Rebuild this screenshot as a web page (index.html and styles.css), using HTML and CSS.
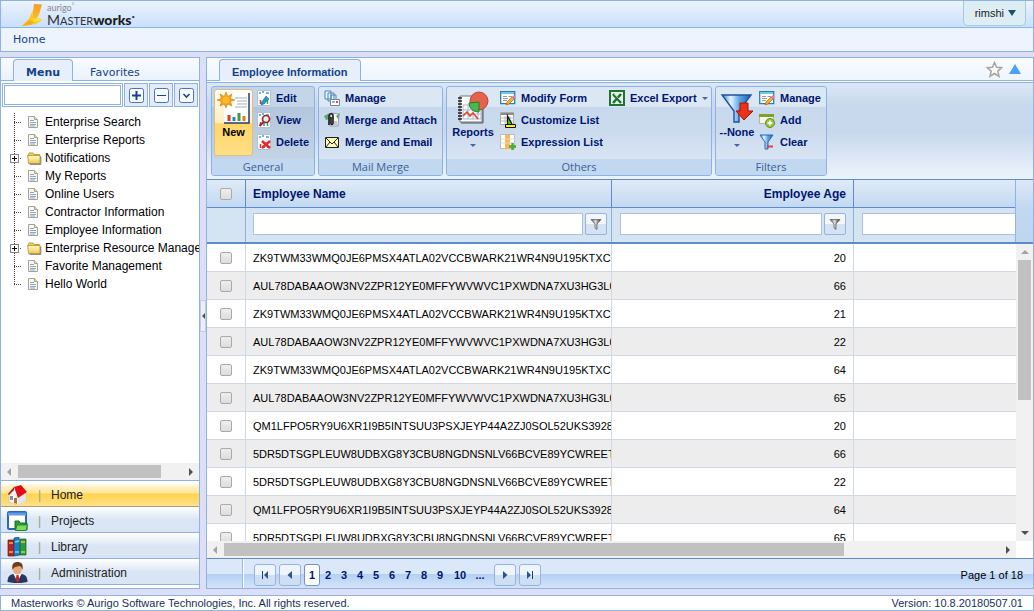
FILE: index.html
```html
<!DOCTYPE html>
<html lang="en">
<head>
<meta charset="utf-8">
<title>Masterworks - Employee Information</title>
<link rel="stylesheet" href="styles.css">
</head>
<body>
<svg class="defs" width="0" height="0" aria-hidden="true">
  <defs>
    <linearGradient id="gold" x1="0" y1="0" x2="0" y2="1"><stop offset="0" stop-color="#fffbc8"/><stop offset="1" stop-color="#f2c94f"/></linearGradient>
    <linearGradient id="blue" x1="0" y1="0" x2="1" y2="0"><stop offset="0" stop-color="#2c7fd6"/><stop offset=".3" stop-color="#e4f3ff"/><stop offset=".6" stop-color="#5da5e8"/><stop offset="1" stop-color="#1c5cae"/></linearGradient>
    <linearGradient id="dark" x1="0" y1="0" x2="1" y2="0"><stop offset="0" stop-color="#555"/><stop offset=".45" stop-color="#ddd"/><stop offset="1" stop-color="#222"/></linearGradient>
    <linearGradient id="logo" x1="0" y1="0" x2="0" y2="1"><stop offset="0" stop-color="#f79a2a"/><stop offset="1" stop-color="#ffc21c"/></linearGradient>
    <symbol id="i-doc" viewBox="0 0 10 12"><path d="M.5.5h6l3 3v8h-9z" fill="#f7f7f1" stroke="#a5a48c"/><path d="M6.5.5v3h3" fill="#dedccb" stroke="#a5a48c"/><path d="M2 4.5h4M2 6.500h6M2 8.500h6M2 10h5" stroke="#8ea6c6"/></symbol>
    <symbol id="i-folder" viewBox="0 0 15 13"><path d="M1 3 2 .9h4l1 1.600h5.700v2H1z" fill="#f0cf68" stroke="#b98f2c" stroke-width=".8"/><path d="M.7 3.500h12.300v8H1.500z" fill="url(#gold)" stroke="#b98f2c" stroke-width=".8"/><path d="M2.500 12.300h11.300V4.500" fill="none" stroke="#77756e"/></symbol>
    <symbol id="i-sheet" viewBox="0 0 14 16"><path d="M.5.5h13v15H.5z" fill="#fff" stroke="#b4c2d4"/><path d="M3.500 10v4" stroke="#d33" stroke-width="1.500"/><path d="M7 11v3" stroke="#38c" stroke-width="1.500"/><path d="M10.500 9v5" stroke="#3a4" stroke-width="1.500"/><path d="M2 3h2M5 2h2M9 3h3" stroke="#4a96d2" stroke-width="1.500"/></symbol>
    <symbol id="i-form" viewBox="0 0 16 16"><path d="M.7 1.700h14v12h-14z" fill="#fff" stroke="#2d7fa8" stroke-width="1.300"/><path d="M1 3h13" stroke="#73c5e6" stroke-width="2"/><path d="M3 6.500h4M3 8.500h5M3 10.500h4" stroke="#999"/><path d="M8.500 6.500h4" stroke="#999"/><path d="m7 12 5-5 2 2-5 5-3 1z" fill="#ffad2e" stroke="#9b651c" stroke-width=".7"/><path d="m12 7 2-2 2 2-2 2z" fill="#df7db0"/></symbol>
    <symbol id="i-funnel" viewBox="0 0 12 12"><path d="M1 1.500h10L7 6v5.500L5 10V6z" fill="url(#dark)" stroke="#555" stroke-width=".7"/></symbol>
  </defs>
</svg>

<header class="banner">
  <div class="logo">
    <svg width="22" height="24" viewBox="0 0 22 24" aria-hidden="true"><path d="m13 1 8 .5-3 10-3 5-4-1z" fill="url(#logo)"/><path d="m12 7-1 9 7-1 3 2-6 4-14 2 7-7z" fill="#ffc81c"/><path d="m12 16 6-1 3 2-8 2z" fill="#ffe23c"/><path d="M1 23l7-6 5 2-3 3z" fill="#f7ad1f"/></svg>
    <div class="logo-text"><span class="logo-top">aurigo<sup>°</sup></span><span class="logo-main">M<small>ASTER</small><b>works</b><sup>•</sup></span></div>
  </div>
  <button class="user" type="button">rimshi <span class="tri-down"></span></button>
</header>
<nav class="crumbs"><a href="#">Home</a></nav>

<main class="main">
  <aside class="side">
    <div class="tabs side-tabs"><button type="button" class="tab active">Menu</button><button type="button" class="tab">Favorites</button></div>
    <div class="search">
      <input type="text" aria-label="Search menu">
      <button type="button" aria-label="Expand all"><svg width="15" height="15"><rect x=".5" y=".5" width="14" height="14" rx="2" fill="#f8fbff" stroke="#4a72c4"/><path d="M3 7.500h9M7.500 3v9" stroke="#1f3fa0" stroke-width="2"/></svg></button>
      <button type="button" aria-label="Collapse all"><svg width="15" height="15"><rect x=".5" y=".5" width="14" height="14" rx="2" fill="#f8fbff" stroke="#4a72c4"/><path d="M3 7.500h9" stroke="#1f3fa0"/></svg></button>
      <button type="button" aria-label="Options"><svg width="15" height="15"><rect x=".5" y=".5" width="14" height="14" rx="2" fill="#f8fbff" stroke="#4a72c4"/><path d="m4.500 6 3 3 3-3" fill="none" stroke="#1f3fa0" stroke-width="1.600"/></svg></button>
    </div>
    <ul class="tree">
      <li><span class="branch"></span><svg class="doc"><use href="#i-doc"/></svg><a href="#">Enterprise Search</a></li>
      <li><span class="branch"></span><svg class="doc"><use href="#i-doc"/></svg><a href="#">Enterprise Reports</a></li>
      <li><span class="branch"><button type="button" class="plus" aria-label="Expand Notifications"></button></span><svg class="folder"><use href="#i-folder"/></svg><a href="#">Notifications</a></li>
      <li><span class="branch"></span><svg class="doc"><use href="#i-doc"/></svg><a href="#">My Reports</a></li>
      <li><span class="branch"></span><svg class="doc"><use href="#i-doc"/></svg><a href="#">Online Users</a></li>
      <li><span class="branch"></span><svg class="doc"><use href="#i-doc"/></svg><a href="#">Contractor Information</a></li>
      <li><span class="branch"></span><svg class="doc"><use href="#i-doc"/></svg><a href="#">Employee Information</a></li>
      <li><span class="branch"><button type="button" class="plus" aria-label="Expand Enterprise Resource Management"></button></span><svg class="folder"><use href="#i-folder"/></svg><a href="#">Enterprise Resource Management</a></li>
      <li><span class="branch"></span><svg class="doc"><use href="#i-doc"/></svg><a href="#">Favorite Management</a></li>
      <li><span class="branch last"></span><svg class="doc"><use href="#i-doc"/></svg><a href="#">Hello World</a></li>
    </ul>
    <div class="hscroll side-scroll"><i class="arr left dim"></i><div class="track"><div class="thumb"></div></div><i class="arr right"></i></div>
    <nav class="modules">
      <a href="#" class="on"><svg width="21" height="20" viewBox="0 0 21 20"><path d="M2 9v8l8 3 9-4V8l-9-1z" fill="#f6f6f4" stroke="#bbb" stroke-width=".6"/><path d="M11 12v8l8-4V8z" fill="#e3e5e8"/><path d="M1 9 8 2l4 9-1 2-4-4z" fill="#fff" stroke="#ccc" stroke-width=".5"/><path d="m7 2 7-2 6 7-9 6z" fill="#e10f14"/><path d="M7 2 1 9l1 1 5-5z" fill="#b30c10"/><path d="M7 13h3v6l-3-1z" fill="#b1712d"/><path d="M3 11h3v4H3z" fill="#7f8fa5"/></svg><i>|</i>Home</a>
      <a href="#"><svg width="21" height="20" viewBox="0 0 21 20"><rect x="1" y="1" width="18" height="17" rx="1" fill="#fff" stroke="#2a64bd" stroke-width="2"/><path d="M1 3h18" stroke="#5e9bea" stroke-width="3"/><path d="M8 10h4l1 2h7v7H8z" fill="#2f9b35" stroke="#187022"/><path d="M10 14h10.500l-1.500 5.500H8.500z" fill="#7edb62" stroke="#238a2b"/></svg><i>|</i>Projects</a>
      <a href="#"><svg width="21" height="20" viewBox="0 0 21 20"><path d="M1 3h6v16H1z" fill="#b92327" stroke="#731516" stroke-width=".7"/><path d="M2 6h4M2 15h4" stroke="#f0b63c" stroke-width="1.500"/><path d="m7 1 5-1 1 18-6 1z" fill="#1683c9" stroke="#0b4e83" stroke-width=".7"/><path d="m8 5 4-1M8 15h4" stroke="#86d2f3" stroke-width="1.500"/><path d="M13 2h6v16h-6z" fill="#2b9b3d" stroke="#14602a" stroke-width=".7"/><path d="M14 5h4M14 15h4" stroke="#e9c64a" stroke-width="1.500"/></svg><i>|</i>Library</a>
      <a href="#"><svg width="21" height="21" viewBox="0 0 20 21"><path d="M0 20c0-6 3-8 7-8h6c4 0 7 2 7 8-6 1.500-14 1.500-20 0z" fill="#29365f"/><path d="m6 12 4 8 4-8z" fill="#fff"/><path d="m9 13-1 5 2 3 2-3-1-5z" fill="#c22"/><ellipse cx="10" cy="7" rx="4.500" ry="5.500" fill="#e6a977"/><path d="M5 8C4 2 6 0 10 0s6 2 5 8c-1-3-2-4-3-4-3 1-5 0-7 4z" fill="#70401d"/></svg><i>|</i>Administration</a>
    </nav>
  </aside>

  <div class="splitter"><button type="button" aria-label="Collapse menu"><i class="arr left"></i></button></div>

  <section class="content">
    <div class="tabs content-tabs">
      <button type="button" class="tab active">Employee Information</button>
      <span class="tools">
        <button type="button" aria-label="Add to favorites"><svg width="17" height="17" viewBox="0 0 17 17"><path d="m8.500 1.500 2.100 4.700 5 .5-3.800 3.400 1.200 5.200-4.500-2.800L4 15.300l1.200-5.200L1.400 6.700l5-.5z" fill="#fbfaf5" stroke="#a5a5a5" stroke-width="1.500"/></svg></button>
        <button type="button" aria-label="Collapse ribbon"><svg width="12" height="10"><path d="m6 0 6 10H0z" fill="#4ba0f8"/></svg></button>
      </span>
    </div>

    <div class="ribbon">
      <div class="group g1">
        <div class="cmds">
          <button type="button" class="big new"><svg width="34" height="34" viewBox="0 0 34 34"><path d="M7 2h25v30H7z" fill="#fff"/><path d="M7 32h25V2" fill="none" stroke="#223c66" stroke-width="1.500"/><path d="M18 7h12M20 10h10M20 13h10M18 16h12" stroke="#a3afc1"/><path d="M12 24v6" stroke="#d93a21" stroke-width="3"/><path d="M17 26v4" stroke="#2583c6" stroke-width="3"/><path d="M22 22v8" stroke="#3c9b49" stroke-width="3"/><path d="M27 25v5" stroke="#e97725" stroke-width="3"/><path d="m9 1 1.700 4.500L15 3l-1.500 4.500L18 9l-4.500 1.500L15 15l-4.300-2L9 17l-1.700-4L3 15l1.500-4.500L0 9l4.500-1.500L3 3l4.300 2.500z" fill="#f7a418" stroke="#d27a0a" stroke-width=".6"/><circle cx="9" cy="9" r="3.500" fill="#ffb92a"/></svg><span>New</span></button>
          <div class="list">
            <button type="button"><svg class="ic" viewBox="0 0 16 16"><use href="#i-sheet" width="14" height="16"/><path d="m4 13 5-7 3 3-5 5-3 1z" fill="#2495cf" stroke="#146792" stroke-width=".5"/></svg>Edit</button>
            <button type="button"><svg class="ic" viewBox="0 0 16 16"><use href="#i-sheet" width="14" height="16"/><circle cx="9" cy="7" r="3.500" fill="#e6f3fb" stroke="#a52222" stroke-width="1.700"/><path d="m6.500 10-4 4" stroke="#a52222" stroke-width="2"/></svg>View</button>
            <button type="button"><svg class="ic" viewBox="0 0 16 16"><use href="#i-sheet" width="14" height="16"/><path d="m5 7 8 7m0-7-8 7" stroke="#e5262b" stroke-width="2.500"/></svg>Delete</button>
          </div>
        </div>
        <div class="title">General</div>
      </div>
      <div class="group g2">
        <div class="cmds">
          <div class="list">
            <button type="button"><svg class="ic" viewBox="0 0 16 16"><path d="M1 1h6v8H1zM4 3h6v8H4zM7 5h5v8H7z" fill="#eaf4fd" stroke="#4a84b8"/><path d="M6.500 9.500h9v6h-9z" fill="#fff" stroke="#6688a5"/><path d="M8 12h3" stroke="#557"/><path d="M12 11h2v2h-2z" fill="#e54a28"/></svg>Manage</button>
            <button type="button"><svg class="ic" viewBox="0 0 16 16"><path d="m7 1 8 1-1 12H6z" fill="#fafafa" stroke="#99a"/><path d="M0 4 4 2l1 5-3 1zM12 4l4-3-2 6z" fill="#55a76a"/><path d="M5 13V4c0-3 4-3 4 0v7c0 2-2 2-2 0V5" fill="none" stroke="#222" stroke-width="1.700"/><path d="M10 10h3M10 12h3" stroke="#999"/></svg>Merge and Attach</button>
            <button type="button"><svg class="ic" viewBox="0 0 16 16"><path d="M1.500 3.500h13v10h-13z" fill="#fffbbb" stroke="#222"/><path d="m2 4 6 6 6-6M2 13l4-5m8 5-4-5" fill="none" stroke="#222"/></svg>Merge and Email</button>
          </div>
        </div>
        <div class="title">Mail Merge</div>
      </div>
      <div class="group g3">
        <div class="cmds">
          <button type="button" class="big"><svg width="34" height="34" viewBox="0 0 34 34"><path d="M4 5h22v26H4z" fill="#fafcfd" stroke="#777"/><path d="M7 14h18v14H7zM7 19h18M7 23h18M12 14v14M17 14v14M22 14v14" fill="none" stroke="#a9b9d9"/><path d="M2 7h4M2 10h4M2 13h4M2 16h4M2 19h4M2 22h4M2 25h4M2 28h4" stroke="#222" stroke-width="1.500"/><path d="m7 25 4-4 3 4 3-3 5 6" fill="none" stroke="#e64620" stroke-width="1.700"/><path d="M5 32h22V14" fill="none" stroke="#555"/><circle cx="23" cy="10" r="9" fill="#e6634b" stroke="#b8463a"/><path d="M23 11v10c-6 0-10-4-10-9z" fill="#4bb84c" stroke="#247a2e"/></svg><span>Reports</span><i class="caret"></i></button>
          <div class="list">
            <button type="button"><svg class="ic" viewBox="0 0 16 16"><use href="#i-form" width="16" height="16"/></svg>Modify Form</button>
            <button type="button"><svg class="ic" viewBox="0 0 16 16"><path d="M.5.500h13v12H.5z" fill="#fff" stroke="#aaa"/><path d="M1 2h13" stroke="#8a8a8a" stroke-width="2"/><path d="M1 6h13M1 9h13M5 4v8M10 4v8" stroke="#bbb"/><path d="M7.500 4v9h5z" fill="#40cd35" stroke="#111" stroke-width="1.300"/><path d="M5.500 12.500h10v3h-10z" fill="#fff000" stroke="#111"/></svg>Customize List</button>
            <button type="button"><svg class="ic" viewBox="0 0 16 16"><path d="M.5.500h14v14H.5z" fill="#fff" stroke="#bbb"/><path d="M5 1h5v14H5z" fill="#ffb54b"/><path d="M1 5h14M1 9h14" stroke="#ddd"/><path d="M12.500 9v7M9 12.500h7" stroke="#4aaa36" stroke-width="2.500"/></svg>Expression List</button>
          </div>
          <div class="list">
            <button type="button"><svg class="ic" viewBox="0 0 16 16"><path d="M1 1h14v14H1z" fill="#e7f3e8" stroke="#207232" stroke-width="2"/><path d="m4 4 8 9M12 4l-8 9" stroke="#207232" stroke-width="2.600"/><path d="m5 4 8 8" stroke="#b7dfbc" stroke-width=".8"/></svg>Excel Export<i class="caret"></i></button>
          </div>
        </div>
        <div class="title">Others</div>
      </div>
      <div class="group g4">
        <div class="cmds">
          <button type="button" class="big"><svg width="34" height="34" viewBox="0 0 34 34"><path d="M2 4h29L19 20v11h-5V20z" fill="url(#blue)" stroke="#1e529c" stroke-width="1.400"/><path d="M20 12h8v8h5l-9 9-8-9h4z" fill="#ee3217" stroke="#a31408"/></svg><span>--None</span><i class="caret"></i></button>
          <div class="list">
            <button type="button"><svg class="ic" viewBox="0 0 16 16"><use href="#i-form" width="16" height="16"/></svg>Manage</button>
            <button type="button"><svg class="ic" viewBox="0 0 16 16"><path d="M.5 2.500h14v9H.5z" fill="#f4f5ec" stroke="#b3b5a7"/><path d="M0 3.500h15" stroke="#83a02d" stroke-width="3"/><circle cx="11" cy="11" r="4.500" fill="#9ac43e" stroke="#6a8c22"/><path d="M11 8.500v5M8.500 11h5" stroke="#fff" stroke-width="1.500"/></svg>Add</button>
            <button type="button"><svg class="ic" viewBox="0 0 16 16"><path d="M1 1h13L9 8v7H6V8z" fill="url(#blue)" stroke="#2b68af"/><path d="M8 12.500h6" stroke="#e43b45" stroke-width="2"/></svg>Clear</button>
          </div>
        </div>
        <div class="title">Filters</div>
      </div>
    </div>

    <div class="grid-head">
      <div class="head-clip">
        <table class="grid">
          <colgroup><col class="c1"><col class="c2"><col class="c3"><col></colgroup>
          <thead>
            <tr class="names"><th><input type="checkbox" aria-label="Select all"></th><th>Employee Name</th><th class="num">Employee Age</th><th></th></tr>
            <tr class="filters"><td></td>
              <td><div class="filter"><input type="text" aria-label="Filter Employee Name"><button type="button" aria-label="Filter by name"><svg width="12" height="12"><use href="#i-funnel"/></svg></button></div></td>
              <td><div class="filter"><input type="text" aria-label="Filter Employee Age"><button type="button" aria-label="Filter by age"><svg width="12" height="12"><use href="#i-funnel"/></svg></button></div></td>
              <td><div class="filter"><input type="text" aria-label="Filter"></div></td></tr>
          </thead>
        </table>
      </div>
      <div class="head-end"></div>
    </div>

    <div class="grid-body">
      <div class="body-clip">
        <table class="grid rows">
          <colgroup><col class="c1"><col class="c2"><col class="c3"><col></colgroup>
          <tbody>
            <tr><td><input type="checkbox" aria-label="Select row 1"></td><td>ZK9TWM33WMQ0JE6PMSX4ATLA02VCCBWARK21WR4N9U195KTXC</td><td class="num">20</td><td></td></tr>
            <tr><td><input type="checkbox" aria-label="Select row 2"></td><td>AUL78DABAAOW3NV2ZPR12YE0MFFYWVWVC1PXWDNA7XU3HG3L0</td><td class="num">66</td><td></td></tr>
            <tr><td><input type="checkbox" aria-label="Select row 3"></td><td>ZK9TWM33WMQ0JE6PMSX4ATLA02VCCBWARK21WR4N9U195KTXC</td><td class="num">21</td><td></td></tr>
            <tr><td><input type="checkbox" aria-label="Select row 4"></td><td>AUL78DABAAOW3NV2ZPR12YE0MFFYWVWVC1PXWDNA7XU3HG3L0</td><td class="num">22</td><td></td></tr>
            <tr><td><input type="checkbox" aria-label="Select row 5"></td><td>ZK9TWM33WMQ0JE6PMSX4ATLA02VCCBWARK21WR4N9U195KTXC</td><td class="num">64</td><td></td></tr>
            <tr><td><input type="checkbox" aria-label="Select row 6"></td><td>AUL78DABAAOW3NV2ZPR12YE0MFFYWVWVC1PXWDNA7XU3HG3L0</td><td class="num">65</td><td></td></tr>
            <tr><td><input type="checkbox" aria-label="Select row 7"></td><td>QM1LFPO5RY9U6XR1I9B5INTSUU3PSXJEYP44A2ZJ0SOL52UKS3928</td><td class="num">20</td><td></td></tr>
            <tr><td><input type="checkbox" aria-label="Select row 8"></td><td>5DR5DTSGPLEUW8UDBXG8Y3CBU8NGDNSNLV66BCVE89YCWREET</td><td class="num">66</td><td></td></tr>
            <tr><td><input type="checkbox" aria-label="Select row 9"></td><td>5DR5DTSGPLEUW8UDBXG8Y3CBU8NGDNSNLV66BCVE89YCWREET</td><td class="num">22</td><td></td></tr>
            <tr><td><input type="checkbox" aria-label="Select row 10"></td><td>QM1LFPO5RY9U6XR1I9B5INTSUU3PSXJEYP44A2ZJ0SOL52UKS3928</td><td class="num">64</td><td></td></tr>
            <tr><td><input type="checkbox" aria-label="Select row 11"></td><td>5DR5DTSGPLEUW8UDBXG8Y3CBU8NGDNSNLV66BCVE89YCWREET</td><td class="num">65</td><td></td></tr>
          </tbody>
        </table>
      </div>
      <div class="vscroll"><i class="arr up dim"></i><div class="track"><div class="thumb"></div></div><i class="arr down"></i></div>
    </div>
    <div class="grid-scroll"><div class="hscroll"><i class="arr left dim"></i><div class="track"><div class="thumb"></div></div><i class="arr right"></i></div></div>

    <div class="pager">
      <div class="pager-lead"></div>
      <nav class="pages">
        <button type="button" class="step" aria-label="First page"><svg width="10" height="10"><path d="M2.500 1v8" stroke="#1f3c78"/><path d="M8 1v8L4 5z" fill="#2d5397"/></svg></button>
        <button type="button" class="step" aria-label="Previous page"><svg width="10" height="10"><path d="M7 1v8L2.500 5z" fill="#2d5397"/></svg></button>
        <a href="#" class="cur">1</a><a href="#">2</a><a href="#">3</a><a href="#">4</a><a href="#">5</a><a href="#">6</a><a href="#">7</a><a href="#">8</a><a href="#">9</a><a href="#" class="wide">10</a><a href="#">...</a>
        <button type="button" class="step next" aria-label="Next page"><svg width="10" height="10"><path d="M3 1v8l4.500-4z" fill="#2d5397"/></svg></button>
        <button type="button" class="step" aria-label="Last page"><svg width="10" height="10"><path d="M7.500 1v8" stroke="#1f3c78"/><path d="M2 1v8l4-4z" fill="#2d5397"/></svg></button>
      </nav>
      <span class="count">Page 1 of 18</span>
    </div>
  </section>
</main>

<footer class="foot"><span>Masterworks © Aurigo Software Technologies, Inc. All rights reserved.</span><span>Version: 10.8.20180507.01</span></footer>
</body>
</html>
```
FILE: styles.css
```css
* { box-sizing: border-box; }
body {
  margin: 0;
  height: 100vh;
  display: flex;
  flex-direction: column;
  background: #dcdff5;
  font-family: "Liberation Sans", Arial, sans-serif;
  font-size: 12px;
  color: #000;
  overflow: hidden;
}
button { font: inherit; color: inherit; margin: 0; padding: 0; border: 0; background: none; }
a { color: inherit; text-decoration: none; }
svg { display: block; flex: none; }
i { font-style: normal; }
.defs { position: absolute; }

/* Banner */
.banner {
  flex: none;
  height: 27px;
  display: flex;
  justify-content: space-between;
  align-items: flex-start;
  padding: 0 7px 0 20px;
  border: 1px solid #8db2e3;
  border-bottom: 0;
  background: linear-gradient(#edf4fe, #deebfd 40%, #c9e0ff);
}
.logo { display: flex; gap: 4px; padding-top: 2px; }
.logo-text { display: flex; flex-direction: column; font-family: Lato, sans-serif; color: #333; }
.logo-text sup { font-size: 6px; line-height: 1px; }
.logo-top { font-size: 9px; line-height: 9px; color: #888; }
.logo-main { font-size: 14px; line-height: 16px; }
.logo-main small { font-size: 11px; }
.logo-main b { color: #1c1c1c; font-weight: 900; }
.user {
  display: flex;
  align-items: center;
  gap: 4px;
  height: 25px;
  padding: 0 9px 0 11px;
  border: 1px solid #a6cbd2;
  border-top: 0;
  border-radius: 0 0 5px 5px;
  background: #dcedf4;
  color: #222;
  font-size: 11px;
}
.tri-down { border: solid transparent; border-width: 6px 4px 0; border-top-color: #13536b; }
.crumbs {
  flex: none;
  height: 25px;
  margin-bottom: 5px;
  padding: 0 12px;
  border: 1px solid #8db2e3;
  background: #eef4fd;
  color: #15428b;
  font: 11px/23px "DejaVu Sans", Verdana, sans-serif;
}

.main { flex: 1; min-height: 0; display: flex; }

/* Tab strips */
.tabs {
  flex: none;
  display: flex;
  height: 23px;
  background: linear-gradient(#fafcff, #e9f2fd);
  border-bottom: 1px solid #8db2e3;
  color: #15428b;
}
.tab { height: 22px; }
.tab.active {
  height: 22px;
  margin-top: 1px;
  margin-bottom: -1px;
  border: 1px solid #8db2e3;
  border-bottom: 0;
  border-radius: 4px 4px 0 0;
  background: linear-gradient(#e6effb, #e8f0fa);
  font-weight: bold;
}
.side-tabs { padding-left: 12px; font-family: "DejaVu Sans", Verdana, sans-serif; font-size: 11px; }
.side-tabs .tab { padding: 6px 17px 0; }
.side-tabs .active { padding: 3px 12px 0; }
.content-tabs { padding-left: 12px; justify-content: space-between; background: linear-gradient(#fafcff, #edf5fd); }
.content-tabs .active { padding: 2px 12px 0; font-size: 11px; }
.tools { display: flex; align-items: center; gap: 6px; padding-right: 12px; }

/* Side panel */
.side {
  flex: none;
  width: 200px;
  display: flex;
  flex-direction: column;
  border: 1px solid #8db2e3;
  background: #fff;
  padding-bottom: 3px;
}
.search { flex: none; display: flex; gap: 1px; margin: 2px 1px 0; }
.search input {
  flex: 1;
  min-width: 0;
  height: 24px;
  padding: 0 4px;
  border: 3px double #8db2e3;
  background: #fff;
}
.search button {
  width: 24px;
  height: 24px;
  display: grid;
  place-items: center;
  border: 1px solid #8db2e3;
  background: #e3ebf8;
}
.tree { flex: 1; min-height: 0; margin: 0; padding: 6px 0 0 9px; list-style: none; overflow: hidden; }
.tree li { display: flex; align-items: center; height: 18px; white-space: nowrap; }
.branch {
  flex: none;
  width: 15px;
  height: 18px;
  display: flex;
  align-items: center;
  background:
    repeating-linear-gradient(#444 0 1px, transparent 1px 2px) 4px 0 / 1px 100% no-repeat,
    repeating-linear-gradient(90deg, #444 0 1px, transparent 1px 2px) 4px 9px / 7px 1px no-repeat;
}
.branch.last { background-size: 1px 10px, 7px 1px; }
.plus {
  width: 9px;
  height: 9px;
  border: 1px solid #848484;
  background:
    linear-gradient(#000, #000) center / 5px 1px no-repeat,
    linear-gradient(#000, #000) center / 1px 5px no-repeat,
    #fff;
}
.doc { width: 10px; height: 12px; margin: 0 7px 0 3px; }
.folder { width: 15px; height: 13px; margin: 0 3px 0 2px; }

/* Scroll bars */
.hscroll { flex: 1; display: flex; align-items: center; height: 17px; padding: 0 6px; gap: 7px; background: #f1f1f1; }
.side-scroll { flex: none; }
.track { flex: 1; min-width: 0; min-height: 0; }
.thumb { background: #c1c1c1; }
.hscroll .thumb { height: 13px; width: 80%; }
.side-scroll .thumb { width: 87%; }
.vscroll { flex: none; width: 17px; display: flex; flex-direction: column; align-items: center; padding: 6px 0; gap: 6px; background: #f1f1f1; }
.vscroll .thumb { width: 13px; height: 53%; }
.arr { flex: none; border: 4px solid transparent; color: #505050; }
.arr.dim { color: #a3a3a3; }
.arr.left { border-left: 0; border-right-color: currentColor; }
.arr.right { border-right: 0; border-left-color: currentColor; }
.arr.up { border-top: 0; border-bottom-color: currentColor; }
.arr.down { border-bottom: 0; border-top-color: currentColor; }

.modules { flex: none; border-top: 1px solid #8db2e3; }
.modules a {
  display: flex;
  align-items: center;
  height: 26px;
  padding: 2px 0 0 6px;
  border-bottom: 1px solid #8db2e3;
  background: linear-gradient(#fff, #dbe6f5 50%, #d9e5f4);
  color: #222;
}
.modules a.on { background: linear-gradient(#fff 8%, #fff0bf 25%, #ffe69a 48%, #ffd34d 52%, #ffe28a); border-bottom-color: #b59d6b; }
.modules svg { width: 21px; }
.modules i { width: 4px; margin: 0 9px 0 10px; color: #93a07a; }

.splitter { flex: none; width: 6px; display: flex; align-items: center; }
.splitter button {
  width: 6px;
  height: 32px;
  margin-bottom: 14px;
  display: grid;
  place-items: center;
  border: 1px solid #c7cde0;
  background: #eceefa;
}
.splitter .arr { border-width: 3px; border-left-width: 0; }

/* Content panel */
.content { flex: 1; min-width: 0; display: flex; flex-direction: column; border: 1px solid #8db2e3; background: #fff; }
.ribbon {
  flex: none;
  display: flex;
  gap: 3px;
  margin-top: 1px;
  height: 97px;
  padding: 3px 4px 0;
  border-top: 1px solid #8db2e3;
  background: linear-gradient(#dce8f5, #c9d9ed 22%, #c7d8ed 52%, #e3ecf7 85%, #ebf2fa);
}
.group {
  display: flex;
  flex-direction: column;
  height: 90px;
  border: 1px solid #8db2e3;
  border-radius: 3px;
  background: linear-gradient(#dce7f4 0 22%, #c8d9ed 23%, #cbdbee 50%, #e0eaf6);
  overflow: hidden;
}
.group.g1 { background: linear-gradient(#c5d5e8 0 22%, #b4c6dd 23%, #c9d8ea); }
.cmds { flex: 1; display: flex; padding: 0 2px; }
.title {
  flex: none;
  height: 16px;
  background: #c1d8f0;
  color: #3e5f96;
  text-align: center;
  font: 11px/16px "Open Sans", sans-serif;
}
.list { display: flex; flex-direction: column; }
.list button {
  display: flex;
  align-items: center;
  gap: 5px;
  height: 22px;
  padding: 0 5px 0 3px;
  color: #00156e;
  font-size: 11px;
  font-weight: bold;
  white-space: nowrap;
}
.ic { width: 16px; height: 16px; }
.big {
  flex: none;
  display: flex;
  flex-direction: column;
  align-items: center;
  width: 48px;
  padding-top: 4px;
  color: #00156e;
  font-size: 11px;
  font-weight: bold;
}
.big span { line-height: 14px; }
.big.new {
  width: 39px;
  height: 67px;
  margin-top: 2px;
  padding-top: 1px;
  border: 1px solid #d9bf85;
  border-radius: 3px;
  background: linear-gradient(#fffcf0, #fdeec2 50%, #ffd768 52%, #ffdf87);
  color: #000;
}
.caret { border: 3px solid transparent; border-top-color: #4a64a8; border-bottom: 0; }
.big .caret { margin-top: 5px; }
.g1 { width: 104px; }
.g2 { width: 125px; }
.g3 { width: 266px; }
.g4 { width: 112px; }
.g1 .list { padding-left: 1px; }
.g1 .list button { gap: 3px; }
.g3 .list button { padding-right: 3px; }
.g4 .big { width: 38px; }

/* Data grid */
.grid-head { flex: none; display: flex; border-top: 1px solid #5d8cc9; border-bottom: 2px solid #5d8cc9; }
.head-clip, .body-clip { flex: 1; min-width: 0; overflow: hidden; }
.head-end { width: 18px; border-left: 1px solid #8db2e3; background: linear-gradient(#dce8f5, #c2d8f1 45%, #bfd6f0); }
.grid { table-layout: fixed; width: 1024px; border-collapse: separate; border-spacing: 0; }
.c1 { width: 39px; }
.c2 { width: 366px; }
.c3 { width: 242px; }
.grid th, .grid td { padding: 0 7px; overflow: hidden; white-space: nowrap; text-align: left; }
.grid .num { text-align: right; }
.grid input[type="checkbox"] {
  appearance: none;
  display: block;
  width: 12px;
  height: 12px;
  margin: 0 0 0 6px;
  border: 1px solid #aaa;
  border-radius: 2px;
  background: linear-gradient(#eee, #ddd);
}
.names th {
  height: 28px;
  border-right: 1px solid #5d8cc9;
  border-bottom: 1px solid #5d8cc9;
  background: linear-gradient(#dfeaf6, #c3d9f2);
  color: #00156e;
}
.filters td { height: 34px; border-right: 1px solid #8fb1dc; background: #d5e4f3; }
.filter { display: flex; align-items: center; gap: 2px; padding-bottom: 2px; }
.filters td:nth-child(2) { padding-right: 4px; }
.filters td:nth-child(n+3) { padding-left: 8px; }
.filter input { flex: 1; min-width: 0; height: 22px; border: 1px solid #abc1de; background: #fff; padding: 0 4px; }
.filter button {
  display: grid;
  place-items: center;
  width: 22px;
  height: 22px;
  border: 1px solid #9ab2dc;
  border-radius: 2px;
  background: linear-gradient(#f3f7fc 50%, #d5e2f3 50%);
}
.grid-body { flex: 1; min-height: 0; display: flex; }
.rows td { height: 28px; border-right: 1px solid #d0d7e5; border-bottom: 1px solid #d0d7e5; font-size: 11px; }
.rows td:nth-child(2) { padding-right: 0; }
.rows tr:nth-child(even) td { background: #ededed; }
.grid-scroll { flex: none; display: flex; padding-right: 17px; }

.pager {
  flex: none;
  display: flex;
  align-items: stretch;
  height: 30px;
  border-top: 1px solid #5d8cc9;
  background: linear-gradient(#dae8f9 0 52%, #b3d0f5 52%, #d4e4f8);
  font-size: 11px;
}
.pager-lead { width: 37px; border-right: 1px solid #fff; box-shadow: inset -1px 0 #9bbbe3; }
.pages { flex: 1; display: flex; align-items: center; padding: 3px 0 0 10px; color: #00156e; font-weight: bold; }
.pages a { width: 16px; height: 22px; line-height: 22px; text-align: center; }
.pages .cur { border: 1px solid #6f93c6; border-radius: 3px; background: #fff; line-height: 20px; }
.pages .wide { width: 24px; }
.step {
  display: grid;
  place-items: center;
  width: 22px;
  height: 22px;
  margin-right: 3px;
  border: 1px solid #9ab2dc;
  border-radius: 3px;
  background: linear-gradient(#edf4fc 50%, #cfdff3 50%);
}
.step.next { margin-left: 6px; }
.count { padding-right: 10px; line-height: 32px; }

.foot {
  flex: none;
  display: flex;
  justify-content: space-between;
  height: 16px;
  margin-top: 6px;
  padding: 0 10px;
  border: 1px solid #8db2e3;
  background: #fff;
  color: #15305c;
  font-size: 11px;
  line-height: 14px;
}
```
